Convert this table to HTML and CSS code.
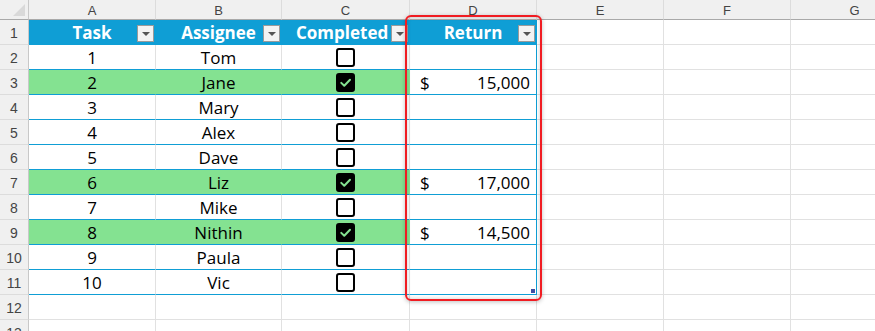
FILE: index.html
```html
<!DOCTYPE html>
<html>
<head>
<meta charset="utf-8">
<link rel="stylesheet" href="styles.css">
</head>
<body>
<div class="sheet">
  <div class="grid">
    <!-- column header -->
    <div class="ch corner"><span class="tri"></span></div>
    <div class="ch">A</div><div class="ch">B</div><div class="ch">C</div><div class="ch">D</div><div class="ch">E</div><div class="ch">F</div><div class="ch last">G</div>

    <!-- row 1 -->
    <div class="rh">1</div>
    <div class="cell th">Task<span class="fb"></span></div>
    <div class="cell th">Assignee<span class="fb"></span></div>
    <div class="cell th thc">Completed<span class="fb"></span></div>
    <div class="cell th tr">Return<span class="fb"></span></div>
    <div class="cell"></div><div class="cell"></div><div class="cell last"></div>

    <!-- row 2 -->
    <div class="rh">2</div>
    <div class="cell td">1</div><div class="cell td">Tom</div>
    <div class="cell td"><span class="cb"></span></div>
    <div class="cell td tr"></div>
    <div class="cell"></div><div class="cell"></div><div class="cell last"></div>

    <div class="rh">3</div>
    <div class="cell td g">2</div><div class="cell td g">Jane</div>
    <div class="cell td g"><span class="cb on"><svg viewBox="0 0 12 12"><path d="M2.6 6.3 L5 8.6 L9.6 3.8"/></svg></span></div>
    <div class="cell td tr money"><span>$</span><span>15,000</span></div>
    <div class="cell"></div><div class="cell"></div><div class="cell last"></div>

    <div class="rh">4</div>
    <div class="cell td">3</div><div class="cell td">Mary</div>
    <div class="cell td"><span class="cb"></span></div>
    <div class="cell td tr"></div>
    <div class="cell"></div><div class="cell"></div><div class="cell last"></div>

    <div class="rh">5</div>
    <div class="cell td">4</div><div class="cell td">Alex</div>
    <div class="cell td"><span class="cb"></span></div>
    <div class="cell td tr"></div>
    <div class="cell"></div><div class="cell"></div><div class="cell last"></div>

    <div class="rh">6</div>
    <div class="cell td">5</div><div class="cell td">Dave</div>
    <div class="cell td"><span class="cb"></span></div>
    <div class="cell td tr"></div>
    <div class="cell"></div><div class="cell"></div><div class="cell last"></div>

    <div class="rh">7</div>
    <div class="cell td g">6</div><div class="cell td g">Liz</div>
    <div class="cell td g"><span class="cb on"><svg viewBox="0 0 12 12"><path d="M2.6 6.3 L5 8.6 L9.6 3.8"/></svg></span></div>
    <div class="cell td tr money"><span>$</span><span>17,000</span></div>
    <div class="cell"></div><div class="cell"></div><div class="cell last"></div>

    <div class="rh">8</div>
    <div class="cell td">7</div><div class="cell td">Mike</div>
    <div class="cell td"><span class="cb"></span></div>
    <div class="cell td tr"></div>
    <div class="cell"></div><div class="cell"></div><div class="cell last"></div>

    <div class="rh">9</div>
    <div class="cell td g">8</div><div class="cell td g">Nithin</div>
    <div class="cell td g"><span class="cb on"><svg viewBox="0 0 12 12"><path d="M2.6 6.3 L5 8.6 L9.6 3.8"/></svg></span></div>
    <div class="cell td tr money"><span>$</span><span>14,500</span></div>
    <div class="cell"></div><div class="cell"></div><div class="cell last"></div>

    <div class="rh">10</div>
    <div class="cell td">9</div><div class="cell td">Paula</div>
    <div class="cell td"><span class="cb"></span></div>
    <div class="cell td tr"></div>
    <div class="cell"></div><div class="cell"></div><div class="cell last"></div>

    <div class="rh">11</div>
    <div class="cell td">10</div><div class="cell td">Vic</div>
    <div class="cell td"><span class="cb"></span></div>
    <div class="cell td tr"><span class="handle"></span></div>
    <div class="cell"></div><div class="cell"></div><div class="cell last"></div>

    <div class="rh">12</div>
    <div class="cell"></div><div class="cell"></div><div class="cell"></div><div class="cell"></div><div class="cell"></div><div class="cell"></div><div class="cell last"></div>

    <div class="rh">13</div>
    <div class="cell"></div><div class="cell"></div><div class="cell"></div><div class="cell"></div><div class="cell"></div><div class="cell"></div><div class="cell last"></div>
  </div>
  <div class="highlight"></div>
</div>
</body>
</html>
```

FILE: styles.css
```css
* { box-sizing: border-box; }
html, body { margin: 0; padding: 0; background: #fff; overflow: hidden; }
body { width: 875px; height: 331px; font-family: "Open Sans", Roboto, sans-serif; }

.sheet { position: relative; width: 875px; height: 331px; overflow: hidden; }

.grid {
  display: grid;
  grid-template-columns: 29px 127px 126px 128px 127px 127px 127px 127px;
  grid-template-rows: 20px repeat(13, 25px);
}

.ch {
  background: #f0f0f0;
  border-bottom: 1px solid #a9a9a9;
  border-right: 1px solid #dcdcdc;
  color: #444;
  font-family: "Liberation Sans", Arial, sans-serif;
  font-size: 13px;
  display: flex; align-items: center; justify-content: center;
  padding-top: 1px;
}
.ch.last { border-right: none; }
.corner { position: relative; border-right: 1px solid #c8c8c8; }
.tri {
  position: absolute; right: 3px; bottom: 3px;
  width: 0; height: 0;
  border-left: 12px solid transparent;
  border-bottom: 12px solid #d9d9d9;
}

.rh {
  background: #f0f0f0;
  border-right: 1px solid #c8c8c8;
  border-bottom: 1px solid #dcdcdc;
  color: #444;
  font-family: "Liberation Sans", Arial, sans-serif;
  font-size: 14px;
  display: flex; align-items: center; justify-content: center;
  padding-top: 1px;
}

.cell {
  border-right: 1px solid #e1e1e1;
  border-bottom: 1px solid #e1e1e1;
  position: relative;
}
.cell.last { border-right: none; }

.th {
  background: #0f9ed5;
  border-color: #0f9ed5;
  color: #fff;
  font-weight: 700;
  font-size: 17px;
  display: flex; align-items: center; justify-content: center;
  padding-top: 1px;
  overflow: hidden;
  white-space: nowrap;
}
.thc { justify-content: flex-start; padding-left: 14px; }
.fb {
  position: absolute; right: 1px; bottom: 2px;
  width: 17px; height: 17px;
  background: #f3f3f3;
  border: 1px solid #9a9a9a;
}
.fb::after {
  content: ""; position: absolute; left: 4px; top: 6px;
  border-left: 4px solid transparent;
  border-right: 4px solid transparent;
  border-top: 4px solid #555;
}

.td {
  border-bottom: 1px solid #0f9ed5;
  color: #000;
  font-size: 17px;
  display: flex; align-items: center; justify-content: center;
  padding-top: 1px;
}
.td.g { background: #84e291; border-right-color: #84e291; }
.tr { border-right: 1px solid #0f9ed5; }
.th.tr { border-right-color: #0f9ed5; }

.money { justify-content: space-between; padding: 1px 6px 0 10px; }

.cb {
  width: 19px; height: 19px;
  border: 2px solid #000;
  border-radius: 3px;
  background: #fff;
  display: flex; align-items: center; justify-content: center;
  margin-top: -1px;
}
.cb.on { background: #000; }
.cb svg { width: 15px; height: 15px; }
.cb path { fill: none; stroke: #84e291; stroke-width: 1.6; stroke-linecap: round; stroke-linejoin: round; }

.handle {
  position: absolute; right: 1px; bottom: 1px;
  width: 4px; height: 4px;
  background: #3d4ea2;
}

.highlight {
  position: absolute;
  left: 405px; top: 15px;
  width: 137px; height: 286px;
  border: 2px solid #f01c22;
  border-radius: 6px;
  box-shadow: 0 1px 4px rgba(0,0,0,0.25), inset 0 0 4px rgba(0,0,0,0.2);
}
```
